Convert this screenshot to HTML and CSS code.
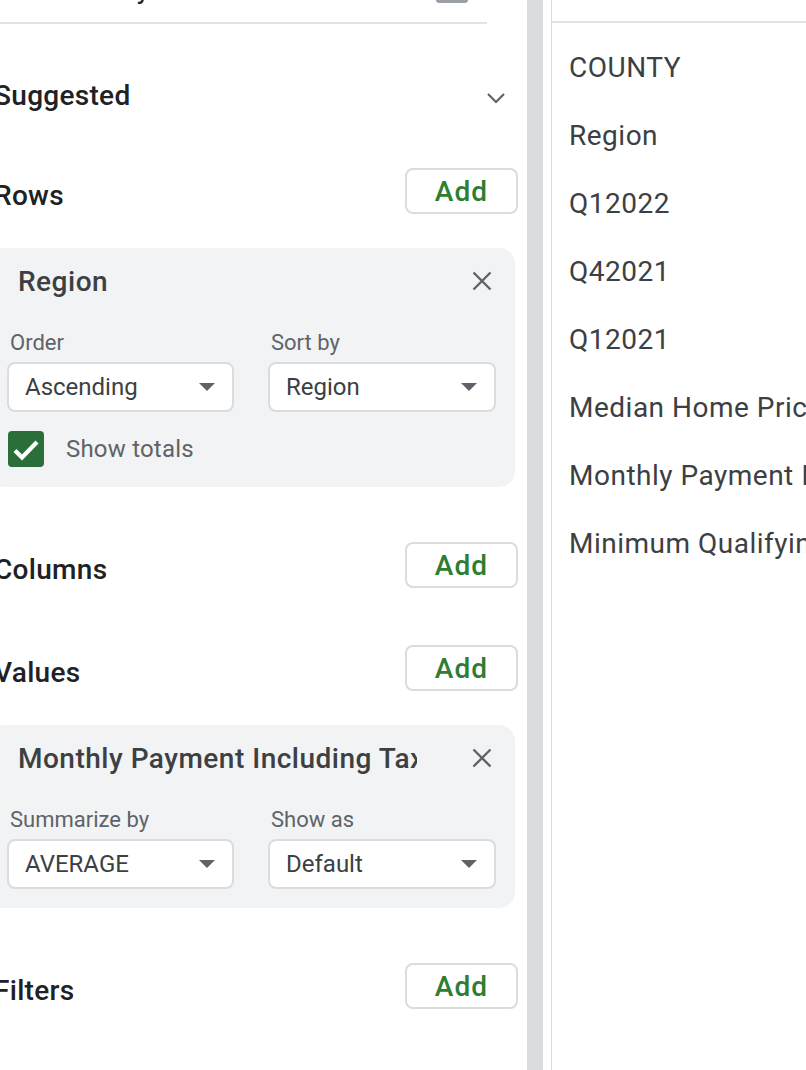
FILE: index.html
```html
<!DOCTYPE html>
<html>
<head>
<meta charset="utf-8">
<link rel="stylesheet" href="styles.css">
</head>
<body>
<div class="app">
  <aside class="editor">
    <div class="editor-inner">
      <div class="top-frag">
        <span class="top-text">y</span>
        <span class="top-box"></span>
      </div>

      <div class="sec sec-suggested">
        <span class="sec-title">Suggested</span>
        <svg class="chev" width="20" height="12" viewBox="0 0 20 12"><polyline points="2,2 10,10 18,2" fill="none" stroke="#5f6368" stroke-width="2.2"/></svg>
      </div>

      <div class="sec sec-rows">
        <span class="sec-title">Rows</span>
        <button class="add">Add</button>
      </div>

      <div class="card">
        <div class="card-head">
          <span class="card-title">Region</span>
          <svg class="close" width="20" height="20" viewBox="0 0 20 20"><path d="M1.5 1.5 L18.5 18.5 M18.5 1.5 L1.5 18.5" stroke="#5f6368" stroke-width="2.4" fill="none"/></svg>
        </div>
        <div class="opts">
          <div class="opt">
            <div class="lbl">Order</div>
            <div class="dd"><span>Ascending</span><i class="caret"></i></div>
          </div>
          <div class="opt">
            <div class="lbl">Sort by</div>
            <div class="dd"><span>Region</span><i class="caret"></i></div>
          </div>
        </div>
        <div class="totals">
          <span class="cb"><svg width="36" height="36" viewBox="0 0 36 36"><polyline points="7,19.5 14,26.5 29,11" fill="none" stroke="#fff" stroke-width="4.2"/></svg></span>
          <span class="totals-text">Show totals</span>
        </div>
      </div>

      <div class="sec sec-columns">
        <span class="sec-title">Columns</span>
        <button class="add">Add</button>
      </div>

      <div class="sec sec-values">
        <span class="sec-title">Values</span>
        <button class="add">Add</button>
      </div>

      <div class="card card-values">
        <div class="card-head">
          <span class="card-title">Monthly Payment Including Tax</span>
          <svg class="close" width="20" height="20" viewBox="0 0 20 20"><path d="M1.5 1.5 L18.5 18.5 M18.5 1.5 L1.5 18.5" stroke="#5f6368" stroke-width="2.4" fill="none"/></svg>
        </div>
        <div class="opts">
          <div class="opt">
            <div class="lbl">Summarize by</div>
            <div class="dd"><span>AVERAGE</span><i class="caret"></i></div>
          </div>
          <div class="opt">
            <div class="lbl">Show as</div>
            <div class="dd"><span>Default</span><i class="caret"></i></div>
          </div>
        </div>
      </div>

      <div class="sec sec-filters">
        <span class="sec-title">Filters</span>
        <button class="add">Add</button>
      </div>
    </div>
  </aside>
  <div class="strip"></div>
  <div class="gap"></div>
  <div class="vline"></div>
  <section class="fields">
    <div class="fields-top"></div>
    <div class="field-list">
      <div class="field">COUNTY</div>
      <div class="field">Region</div>
      <div class="field">Q12022</div>
      <div class="field">Q42021</div>
      <div class="field">Q12021</div>
      <div class="field">Median Home Price</div>
      <div class="field">Monthly Payment Including Tax</div>
      <div class="field">Minimum Qualifying Income</div>
    </div>
  </section>
</div>
</body>
</html>
```

FILE: styles.css
```css
* { box-sizing: border-box; margin: 0; padding: 0; }
html, body { width: 806px; height: 1070px; overflow: hidden; background: #fff; }
body { font-family: Roboto, "Noto Sans", sans-serif; color: #3c4043; }

.app { display: flex; height: 1070px; }

.editor { width: 527px; flex: none; overflow: hidden; }
.editor-inner { margin-left: -12px; width: 530px; }

.top-frag {
  height: 24px;
  margin-right: 31px;
  border-bottom: 2px solid #e3e3e3;
  display: flex;
  align-items: flex-start;
  overflow: hidden;
}
.top-text {
  width: 162px;
  text-align: right;
  font-size: 28px;
  line-height: 28px;
  margin-top: -25px;
  color: #202124;
}
.top-box {
  margin-left: 286px;
  width: 32px;
  height: 3px;
  background: #9aa0a6;
  border-radius: 0 0 4px 4px;
}

.sec {
  display: flex;
  align-items: center;
  justify-content: space-between;
  height: 46px;
  padding-left: 6px;
}
.sec-title {
  font-size: 28px;
  font-weight: 500;
  color: #202124;
  line-height: 46px;
  letter-spacing: 0.3px;
}
.sec-rows .sec-title,
.sec-columns .sec-title,
.sec-values .sec-title,
.sec-filters .sec-title { padding-top: 9px; }
.sec-suggested { margin-top: 49px; padding-right: 12px; }
.sec-rows { margin-top: 49px; }
.sec-columns { margin-top: 55px; }
.sec-values { margin-top: 57px; }
.sec-filters { margin-top: 55px; }
.chev { display: block; margin-top: 4px; }

.add {
  width: 113px;
  height: 46px;
  border: 2px solid #dadce0;
  border-radius: 8px;
  background: #fff;
  color: #2e7d32;
  font-family: Roboto, sans-serif;
  font-weight: 500;
  font-size: 28px;
  letter-spacing: 1.2px;
}

.card {
  margin: 34px 3px 0 0;
  background: #f1f3f4;
  border-radius: 16px;
  padding: 10px 19px 20px 19px;
}
.card-values { padding-bottom: 19px; }

.card-head {
  display: flex;
  align-items: center;
  height: 46px;
  padding-left: 11px;
  padding-right: 4px;
}
.card-title {
  flex: 1;
  min-width: 0;
  overflow: hidden;
  white-space: nowrap;
  font-size: 28px;
  font-weight: 500;
  letter-spacing: 0.5px;
  color: #3c4043;
  margin-right: 55px;
}
.close { display: block; flex: none; }

.opts {
  display: grid;
  grid-template-columns: 227px 228px;
  column-gap: 34px;
  margin-top: 25px;
}
.lbl { font-size: 22px; line-height: 28px; color: #5f6368; padding-left: 3px; }
.dd {
  margin-top: 5px;
  height: 50px;
  border: 2px solid #dadce0;
  border-radius: 8px;
  background: #fff;
  display: flex;
  align-items: center;
  justify-content: space-between;
  padding: 0 17px 0 16px;
  font-size: 24px;
  color: #3c4043;
}
.caret {
  width: 0; height: 0;
  border-left: 8px solid transparent;
  border-right: 8px solid transparent;
  border-top: 8px solid #5f6368;
}

.totals {
  display: flex;
  align-items: center;
  gap: 22px;
  margin-top: 19px;
  height: 36px;
  padding-left: 1px;
}
.cb { width: 36px; height: 36px; border-radius: 4px; background: #2a6e3a; display: block; }
.cb svg { display: block; }
.totals-text { font-size: 24px; color: #5f6368; letter-spacing: 0.2px; }

.strip { width: 16px; flex: none; background: #dadce0; }
.gap { width: 8px; flex: none; }
.vline { width: 1px; flex: none; background: #dadce0; }

.fields { flex: 1; min-width: 0; overflow: hidden; }
.fields-top { height: 23px; border-bottom: 2px solid #e3e3e3; }
.field-list { margin-top: 11px; }
.field {
  height: 68px;
  line-height: 68px;
  font-size: 28px;
  letter-spacing: 0.5px;
  padding-left: 17px;
  white-space: nowrap;
  color: #3c4043;
}
```
